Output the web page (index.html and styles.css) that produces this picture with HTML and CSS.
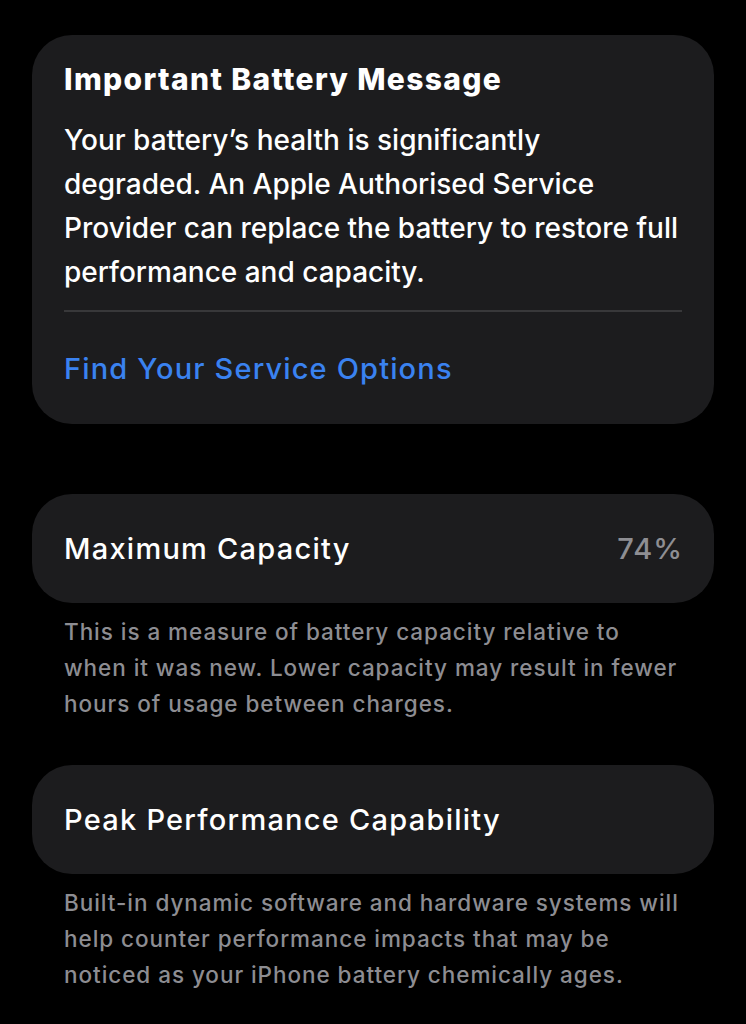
FILE: index.html
```html
<!DOCTYPE html>
<html lang="en">
<head>
<meta charset="utf-8">
<title>Battery Health</title>
<link rel="stylesheet" href="styles.css">
</head>
<body>
<main class="screen">
  <section class="card message">
    <h2 class="message-title">Important Battery Message</h2>
    <p class="message-body">Your battery’s health is significantly degraded. An Apple Authorised Service Provider can replace the battery to restore full performance and capacity.</p>
    <div class="divider"></div>
    <a class="message-link" href="#">Find Your Service Options</a>
  </section>

  <section class="group capacity">
    <div class="card row">
      <span class="row-label">Maximum Capacity</span>
      <span class="row-value">74%</span>
    </div>
    <p class="footnote">This is a measure of battery capacity relative to when it was new. Lower capacity may result in fewer hours of usage between charges.</p>
  </section>

  <section class="group performance">
    <div class="card row">
      <span class="row-label">Peak Performance Capability</span>
    </div>
    <p class="footnote">Built-in dynamic software and hardware systems will help counter performance impacts that may be noticed as your iPhone battery chemically ages.</p>
  </section>
</main>
</body>
</html>
```

FILE: styles.css
```css
html, body {
  margin: 0;
  padding: 0;
  background: #000;
}

body {
  font-family: Inter, "Noto Sans", "Liberation Sans", sans-serif;
  color: #fff;
  -webkit-font-smoothing: antialiased;
}

.screen {
  width: 746px;
  height: 1024px;
  overflow: hidden;
  padding: 35px 32px 0;
  box-sizing: border-box;
  display: flex;
  flex-direction: column;
}

.card {
  background: #1c1c1e;
  border-radius: 40px;
}

/* Message card */
.message {
  padding: 24px 32px 35px;
  display: flex;
  flex-direction: column;
}

.message-title {
  margin: 0;
  font-size: 30px;
  font-weight: 800;
  line-height: 40px;
  letter-spacing: 1.35px;
}

.message-body {
  margin: 19px 0 0;
  font-size: 28px;
  font-weight: 500;
  line-height: 44px;
  letter-spacing: 0;
}

.divider {
  height: 2px;
  background: #38383a;
  margin-top: 16px;
}

.message-link {
  margin-top: 37px;
  font-size: 29px;
  font-weight: 500;
  line-height: 40px;
  color: #3a82f0;
  text-decoration: none;
  letter-spacing: 1.15px;
}

/* Grouped rows */
.group {
  display: flex;
  flex-direction: column;
}

.capacity {
  margin-top: 70px;
}

.performance {
  margin-top: 43px;
}

.row {
  height: 109px;
  padding: 0 32px;
  display: flex;
  align-items: center;
  justify-content: space-between;
  font-size: 29px;
  font-weight: 500;
  letter-spacing: 1.25px;
}

.row-value {
  color: #8e8e93;
  letter-spacing: 1px;
  margin-right: -1px;
}

.footnote {
  margin: 11px 0 0;
  padding: 0 32px;
  font-size: 22.5px;
  font-weight: 500;
  line-height: 36px;
  letter-spacing: 0.95px;
  color: #8d8d92;
}
```
